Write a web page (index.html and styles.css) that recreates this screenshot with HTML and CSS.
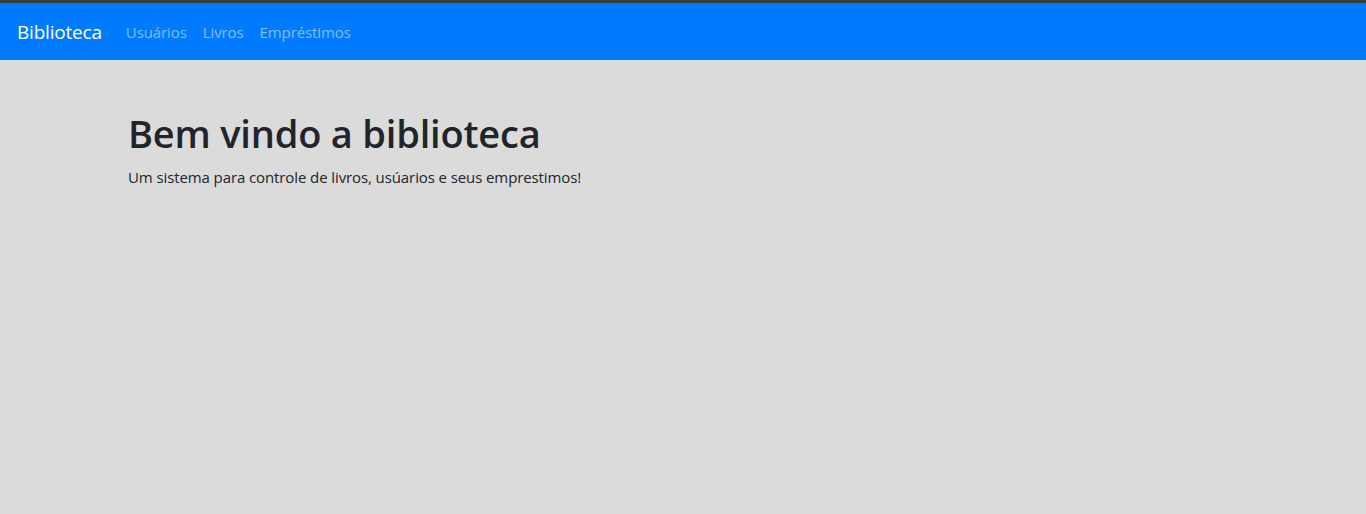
FILE: index.html
```html
<!DOCTYPE html>
<html lang="pt-BR">
<head>
<meta charset="utf-8">
<title>Biblioteca</title>
<link rel="stylesheet" href="styles.css">
</head>
<body>
<div class="topline"></div>
<nav class="navbar">
  <a class="brand" href="#">Biblioteca</a>
  <ul class="nav">
    <li><a href="#">Usuários</a></li>
    <li><a href="#">Livros</a></li>
    <li><a href="#">Empréstimos</a></li>
  </ul>
</nav>
<main class="container">
  <h1>Bem vindo a biblioteca</h1>
  <p>Um sistema para controle de livros, usúarios e seus emprestimos!</p>
</main>
</body>
</html>
```
FILE: styles.css
```css
* { box-sizing: border-box; }
html, body { height: 100%; }
body {
  margin: 0;
  background: #dbdbdb;
  color: #212529;
  font-family: "Open Sans", "Noto Sans", sans-serif;
  font-size: 16px;
}
.topline { height: 3px; background: #3b3b3b; }
.navbar {
  height: 57px;
  background: #007bff;
  display: flex;
  align-items: center;
  padding: 1px 16px 0 17px;
}
.brand {
  color: #fff;
  text-decoration: none;
  font-size: 19px;
  letter-spacing: -0.2px;
  margin-right: 16px;
}
.nav {
  display: flex;
  list-style: none;
  margin: 0;
  padding: 0;
  gap: 0;
}
.nav a {
  display: block;
  padding: 0 8px;
  color: rgba(255,255,255,0.5);
  text-decoration: none;
  font-size: 15px;
  letter-spacing: -0.1px;
}
.container {
  max-width: 1140px;
  margin: 0 auto;
  padding: 51px 15px 0;
}
h1 {
  margin: 0 0 10px;
  font-size: 38px;
  font-weight: 600;
  line-height: 1.2;
  letter-spacing: -0.2px;
}
p {
  margin: 0;
  font-size: 15px;
  letter-spacing: -0.1px;
}
```
